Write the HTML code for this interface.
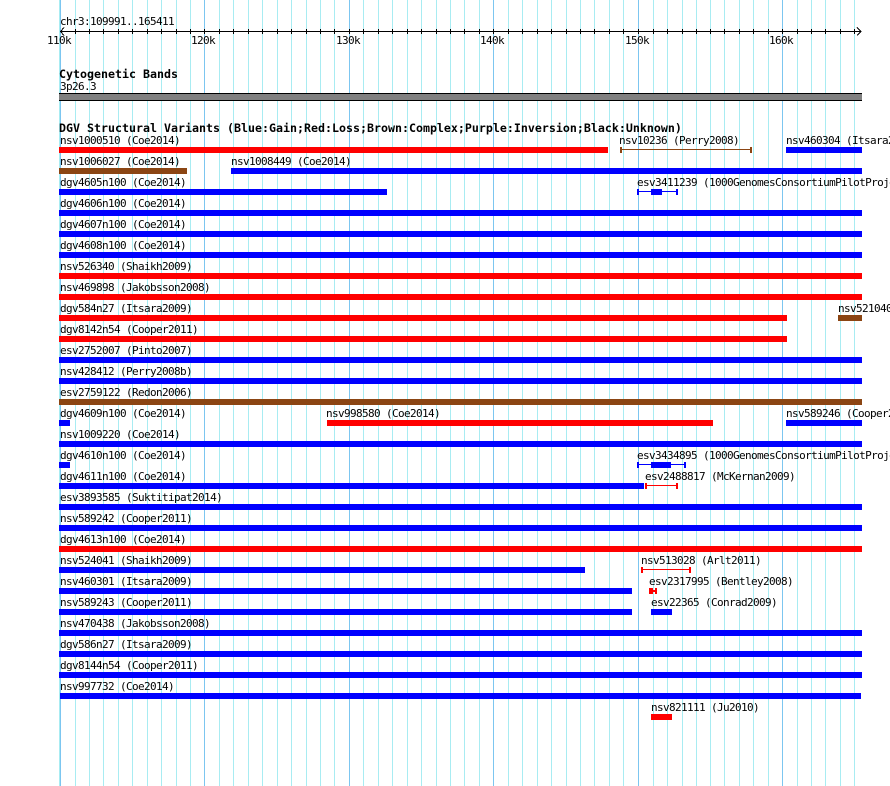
<!DOCTYPE html>
<html><head><meta charset="utf-8"><style>
html,body{margin:0;padding:0;background:#fff}
body{width:890px;height:786px;overflow:hidden}
svg{display:block}
text{font-family:"DejaVu Sans Mono","Liberation Mono",monospace;font-size:11px;letter-spacing:-0.62px;fill:#000}
text.b{font-weight:bold;font-size:11.63px;letter-spacing:0}
</style></head><body>
<svg width="890" height="786" viewBox="0 0 890 786" xmlns="http://www.w3.org/2000/svg" shape-rendering="crispEdges">
<path stroke="#a8ecf2" stroke-width="1" fill="none" d="M75.5 0V786M89.5 0V786M103.5 0V786M118.5 0V786M132.5 0V786M147.5 0V786M161.5 0V786M176.5 0V786M190.5 0V786M219.5 0V786M233.5 0V786M248.5 0V786M262.5 0V786M277.5 0V786M291.5 0V786M306.5 0V786M320.5 0V786M334.5 0V786M363.5 0V786M378.5 0V786M392.5 0V786M407.5 0V786M421.5 0V786M436.5 0V786M450.5 0V786M464.5 0V786M479.5 0V786M508.5 0V786M522.5 0V786M537.5 0V786M551.5 0V786M566.5 0V786M580.5 0V786M594.5 0V786M609.5 0V786M623.5 0V786M653.5 0V786M667.5 0V786M682.5 0V786M696.5 0V786M710.5 0V786M724.5 0V786M739.5 0V786M753.5 0V786M768.5 0V786M797.5 0V786M811.5 0V786M825.5 0V786M840.5 0V786M854.5 0V786"/>
<path stroke="#7cc6f0" stroke-width="1" fill="none" d="M60.5 0V786M204.5 0V786M349.5 0V786M493.5 0V786M638.5 0V786M782.5 0V786"/>
<rect x="59" y="0" width="1" height="786" fill="#a8ecf2"/>

<!-- ruler -->
<path stroke="#000" stroke-width="1" fill="none" d="M60 31.5H861M64 27.5L60.5 31.5L64 35.5M857 27.5L861 31.5L857 35.5M75.5 29V34M89.5 29V34M103.5 29V34M118.5 29V34M132.5 29V34M147.5 29V34M161.5 29V34M176.5 29V34M190.5 29V34M204.5 29V34M219.5 29V34M233.5 29V34M248.5 29V34M262.5 29V34M277.5 29V34M291.5 29V34M306.5 29V34M320.5 29V34M334.5 29V34M349.5 29V34M363.5 29V34M378.5 29V34M392.5 29V34M407.5 29V34M421.5 29V34M436.5 29V34M450.5 29V34M464.5 29V34M479.5 29V34M493.5 29V34M508.5 29V34M522.5 29V34M537.5 29V34M551.5 29V34M566.5 29V34M580.5 29V34M594.5 29V34M609.5 29V34M623.5 29V34M638.5 29V34M653.5 29V34M667.5 29V34M682.5 29V34M696.5 29V34M710.5 29V34M724.5 29V34M739.5 29V34M753.5 29V34M768.5 29V34M782.5 29V34M797.5 29V34M811.5 29V34M825.5 29V34M840.5 29V34M854.5 29V34"/>
<text x="60" y="25">chr3:109991..165411</text>
<text x="47" y="44">110k</text>
<text x="191" y="44">120k</text>
<text x="336" y="44">130k</text>
<text x="480" y="44">140k</text>
<text x="625" y="44">150k</text>
<text x="769" y="44">160k</text>

<!-- bands -->
<text class="b" x="59" y="78">Cytogenetic Bands</text>
<text x="60" y="90">3p26.3</text>
<rect x="59" y="93" width="803" height="8" fill="#000"/>
<rect x="59" y="94" width="803" height="6" fill="#808080"/>

<text class="b" x="59" y="132">DGV Structural Variants (Blue:Gain;Red:Loss;Brown:Complex;Purple:Inversion;Black:Unknown)</text>

<!-- labels -->
<text x="60" y="144">nsv1000510 (Coe2014)</text>
<text x="619" y="144">nsv10236 (Perry2008)</text>
<text x="786" y="144">nsv460304 (Itsara2009)</text>
<text x="60" y="165">nsv1006027 (Coe2014)</text>
<text x="231" y="165">nsv1008449 (Coe2014)</text>
<text x="60" y="186">dgv4605n100 (Coe2014)</text>
<text x="637" y="186">esv3411239 (1000GenomesConsortiumPilotProject)</text>
<text x="60" y="207">dgv4606n100 (Coe2014)</text>
<text x="60" y="228">dgv4607n100 (Coe2014)</text>
<text x="60" y="249">dgv4608n100 (Coe2014)</text>
<text x="60" y="270">nsv526340 (Shaikh2009)</text>
<text x="60" y="291">nsv469898 (Jakobsson2008)</text>
<text x="60" y="312">dgv584n27 (Itsara2009)</text>
<text x="838" y="312">nsv521040</text>
<text x="60" y="333">dgv8142n54 (Cooper2011)</text>
<text x="60" y="354">esv2752007 (Pinto2007)</text>
<text x="60" y="375">nsv428412 (Perry2008b)</text>
<text x="60" y="396">esv2759122 (Redon2006)</text>
<text x="60" y="417">dgv4609n100 (Coe2014)</text>
<text x="326" y="417">nsv998580 (Coe2014)</text>
<text x="786" y="417">nsv589246 (Cooper2011)</text>
<text x="60" y="438">nsv1009220 (Coe2014)</text>
<text x="60" y="459">dgv4610n100 (Coe2014)</text>
<text x="637" y="459">esv3434895 (1000GenomesConsortiumPilotProject)</text>
<text x="60" y="480">dgv4611n100 (Coe2014)</text>
<text x="645" y="480">esv2488817 (McKernan2009)</text>
<text x="60" y="501">esv3893585 (Suktitipat2014)</text>
<text x="60" y="522">nsv589242 (Cooper2011)</text>
<text x="60" y="543">dgv4613n100 (Coe2014)</text>
<text x="60" y="564">nsv524041 (Shaikh2009)</text>
<text x="641" y="564">nsv513028 (Arlt2011)</text>
<text x="60" y="585">nsv460301 (Itsara2009)</text>
<text x="649" y="585">esv2317995 (Bentley2008)</text>
<text x="60" y="606">nsv589243 (Cooper2011)</text>
<text x="651" y="606">esv22365 (Conrad2009)</text>
<text x="60" y="627">nsv470438 (Jakobsson2008)</text>
<text x="60" y="648">dgv586n27 (Itsara2009)</text>
<text x="60" y="669">dgv8144n54 (Cooper2011)</text>
<text x="60" y="690">nsv997732 (Coe2014)</text>
<text x="651" y="711">nsv821111 (Ju2010)</text>

<!-- blue bars -->
<g fill="#0000ff">
<rect x="786" y="147" width="76" height="6"/>
<rect x="231" y="168" width="631" height="6"/>
<rect x="59" y="189" width="328" height="6"/>
<rect x="59" y="210" width="803" height="6"/>
<rect x="59" y="231" width="803" height="6"/>
<rect x="59" y="252" width="803" height="6"/>
<rect x="59" y="357" width="803" height="6"/>
<rect x="59" y="378" width="803" height="6"/>
<rect x="59" y="420" width="11" height="6"/>
<rect x="786" y="420" width="76" height="6"/>
<rect x="59" y="441" width="803" height="6"/>
<rect x="59" y="462" width="11" height="6"/>
<rect x="59" y="483" width="585" height="6"/>
<rect x="59" y="504" width="803" height="6"/>
<rect x="59" y="525" width="803" height="6"/>
<rect x="59" y="567" width="526" height="6"/>
<rect x="59" y="588" width="573" height="6"/>
<rect x="59" y="609" width="573" height="6"/>
<rect x="651" y="609" width="21" height="6"/>
<rect x="59" y="630" width="803" height="6"/>
<rect x="59" y="651" width="803" height="6"/>
<rect x="59" y="672" width="803" height="6"/>
<rect x="60" y="693" width="801" height="6"/>
<!-- esv3411239 -->
<rect x="637" y="189" width="2" height="6"/>
<rect x="676" y="189" width="2" height="6"/>
<rect x="637" y="191" width="41" height="1"/>
<rect x="651" y="189" width="11" height="6"/>
<!-- esv3434895 -->
<rect x="637" y="462" width="2" height="6"/>
<rect x="684" y="462" width="2" height="6"/>
<rect x="637" y="464" width="49" height="1"/>
<rect x="651" y="462" width="20" height="6"/>
</g>

<!-- red bars -->
<g fill="#ff0000">
<rect x="59" y="147" width="549" height="6"/>
<rect x="59" y="273" width="803" height="6"/>
<rect x="59" y="294" width="803" height="6"/>
<rect x="59" y="315" width="728" height="6"/>
<rect x="59" y="336" width="728" height="6"/>
<rect x="327" y="420" width="386" height="6"/>
<rect x="59" y="546" width="803" height="6"/>
<rect x="651" y="714" width="21" height="6"/>
<!-- esv2488817 -->
<rect x="645" y="483" width="2" height="6"/>
<rect x="676" y="483" width="2" height="6"/>
<rect x="645" y="485" width="33" height="1"/>
<!-- nsv513028 -->
<rect x="641" y="567" width="2" height="6"/>
<rect x="689" y="567" width="2" height="6"/>
<rect x="641" y="569" width="50" height="1"/>
<!-- esv2317995 -->
<rect x="649" y="588" width="4" height="6"/>
<rect x="655" y="588" width="2" height="6"/>
<rect x="649" y="590" width="8" height="2"/>
</g>

<!-- brown bars -->
<g fill="#8b4513">
<rect x="59" y="168" width="128" height="6"/>
<rect x="838" y="315" width="24" height="6"/>
<rect x="59" y="399" width="803" height="6"/>
<rect x="620" y="147" width="2" height="6"/>
<rect x="750" y="147" width="2" height="6"/>
<rect x="620" y="149" width="132" height="1"/>
</g>
</svg>
</body></html>
